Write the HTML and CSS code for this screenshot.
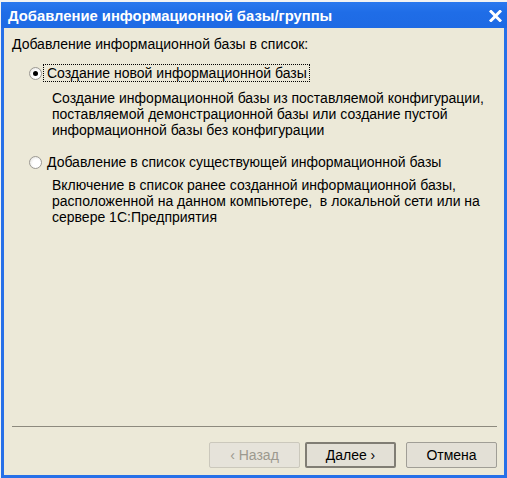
FILE: index.html
```html
<!DOCTYPE html>
<html lang="ru">
<head>
  <meta charset="UTF-8">
  <title>Добавление информационной базы/группы</title>
  <link rel="stylesheet" href="styles.css">
</head>
<body>
  <div class="window">
    <div class="titlebar">
      <span class="title">Добавление информационной базы/группы</span>
      <svg class="close" width="13" height="12" viewBox="0 0 13 12">
        <path d="M2 1.5 L11 10.5 M11 1.5 L2 10.5" stroke="#fff" stroke-width="3" stroke-linecap="square"/>
      </svg>
    </div>
    <div class="client">
      <div class="content">
        <div class="heading">Добавление информационной базы в список:</div>
        <div class="option">
          <span class="radio checked"></span>
          <span class="label focus">Создание новой информационной базы</span>
        </div>
        <div class="desc">
          Создание информационной базы из поставляемой конфигурации,<br>
          поставляемой демонстрационной базы или создание пустой<br>
          информационной базы без конфигурации
        </div>
        <div class="option second">
          <span class="radio"></span>
          <span class="label">Добавление в список существующей информационной базы</span>
        </div>
        <div class="desc second">
          Включение в список ранее созданной информационной базы,<br>
          расположенной на данном компьютере,&nbsp; в локальной сети или на<br>
          сервере 1С:Предприятия
        </div>
      </div>
      <div class="separator"></div>
      <div class="buttons">
        <button class="btn" disabled>‹ Назад</button>
        <button class="btn default">Далее ›</button>
        <button class="btn cancel">Отмена</button>
      </div>
    </div>
  </div>
</body>
</html>
```

FILE: styles.css
```css
body {
  margin: 0;
  padding: 2px 0 0 1px;
  background: #f2f2f2;
  font-family: "Liberation Sans", Arial, sans-serif;
  font-size: 14px;
  color: #000;
}

.window {
  width: 506px;
  height: 476px;
  box-sizing: border-box;
  background: #2670e8;
  padding: 0 3px 3px 3px;
  display: flex;
  flex-direction: column;
}

.titlebar {
  height: 26px;
  margin: 0 -3px;
  padding: 0 5px 0 7px;
  display: flex;
  align-items: center;
  justify-content: space-between;
  background: linear-gradient(#2a78ee, #1f6de7 40%, #1e6ae4);
}
.title {
  color: #fff;
  font-weight: bold;
  font-size: 14.8px;
  padding-top: 1px;
}
.close {
  margin-top: 1px;
}

.client {
  flex: 1;
  background: #ece9d8;
  display: flex;
  flex-direction: column;
}

.content {
  flex: 1;
  padding: 8px 0 0 8px;
  line-height: 16px;
}

.option {
  display: flex;
  align-items: center;
  margin-top: 13px;
  padding-left: 17px;
  height: 16px;
}
.option.second {
  margin-top: 16px;
}

.radio {
  width: 11px;
  height: 11px;
  border: 1px solid #9c9a94;
  border-radius: 50%;
  background: radial-gradient(circle at 60% 60%, #ffffff 40%, #dcdbd5);
  position: relative;
  flex: none;
}
.radio.checked::after {
  content: "";
  position: absolute;
  left: 3px;
  top: 3px;
  width: 5px;
  height: 5px;
  border-radius: 50%;
  background: #000;
}

.label {
  margin-left: 2px;
  padding: 0 2px 0 3px;
  line-height: 16px;
}
.label.focus {
  outline: 1px dotted #000;
  outline-offset: 0;
}

.desc {
  margin-top: 9px;
  padding-left: 40px;
}
.desc.second {
  margin-top: 7px;
}

.separator {
  height: 1px;
  background: #8d8a7e;
  margin: 0 7px 0 8px;
}

.buttons {
  display: flex;
  justify-content: flex-end;
  padding: 15px 7px 7px 0;
  gap: 5px;
}

.btn {
  width: 91px;
  height: 26px;
  font-family: "Liberation Sans", Arial, sans-serif;
  font-size: 14px;
  color: #000;
  background: #e3e0d6;
  border: 1px solid #8e8c84;
  border-radius: 2px;
  padding: 0;
}
.btn:disabled {
  color: #9c998f;
  border-color: #cbc8bc;
  background: #e6e3da;
}
.btn.default {
  border: 2px solid #807d74;
}
.btn.cancel {
  margin-left: 5px;
  border-color: #a09e96;
}
```
